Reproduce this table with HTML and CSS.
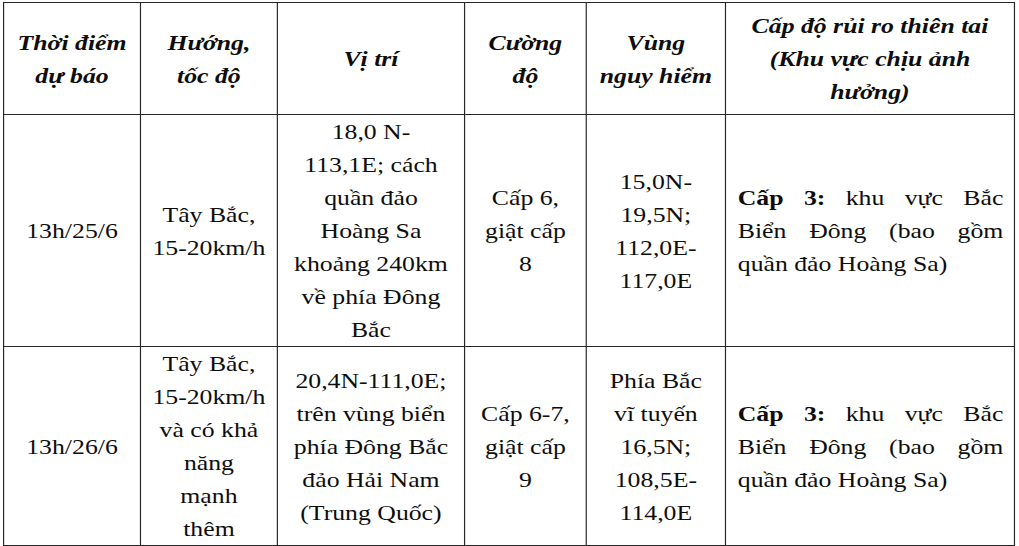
FILE: index.html
```html
<!DOCTYPE html>
<html lang="vi">
<head>
<meta charset="utf-8">
<title>Dự báo bão</title>
<link rel="stylesheet" href="styles.css">
</head>
<body>
<div class="page">
  <div class="sheet">
    <table class="forecast">
      <colgroup>
        <col class="c1"><col class="c2"><col class="c3"><col class="c4"><col class="c5"><col class="c6">
      </colgroup>
      <thead>
        <tr class="head">
          <th>Thời điểm<br>dự báo</th>
          <th>Hướng,<br>tốc độ</th>
          <th>Vị trí</th>
          <th>Cường<br>độ</th>
          <th>Vùng<br>nguy hiểm</th>
          <th>Cấp độ rủi ro thiên tai<br>(Khu vực chịu ảnh<br>hưởng)</th>
        </tr>
      </thead>
      <tbody>
        <tr>
          <td>13h/25/6</td>
          <td>Tây Bắc,<br>15-20km/h</td>
          <td>18,0 N-<br>113,1E; cách<br>quần đảo<br>Hoàng Sa<br>khoảng 240km<br>về phía Đông<br>Bắc</td>
          <td>Cấp 6,<br>giật cấp<br>8</td>
          <td>15,0N-<br>19,5N;<br>112,0E-<br>117,0E</td>
          <td class="risk"><span class="line"><b>Cấp 3:</b> khu vực Bắc</span> <span class="line">Biển Đông (bao gồm</span> <span class="last">quần đảo Hoàng Sa)</span></td>
        </tr>
        <tr>
          <td>13h/26/6</td>
          <td>Tây Bắc,<br>15-20km/h<br>và có khả<br>năng<br>mạnh<br>thêm</td>
          <td>20,4N-111,0E;<br>trên vùng biển<br>phía Đông Bắc<br>đảo Hải Nam<br>(Trung Quốc)</td>
          <td>Cấp 6-7,<br>giật cấp<br>9</td>
          <td>Phía Bắc<br>vĩ tuyến<br>16,5N;<br>108,5E-<br>114,0E</td>
          <td class="risk"><span class="line"><b>Cấp 3:</b> khu vực Bắc</span> <span class="line">Biển Đông (bao gồm</span> <span class="last">quần đảo Hoàng Sa)</span></td>
        </tr>
      </tbody>
    </table>
  </div>
</div>
</body>
</html>
```

FILE: styles.css
```css
html, body {
  margin: 0;
  padding: 0;
  background: #ffffff;
  overflow: hidden;
}

.page {
  padding: 2px 0 0 3px;
}

.sheet {
  width: 864px;
  transform: scaleX(1.17);
  transform-origin: 0 0;
}

.forecast {
  width: 864px;
  table-layout: fixed;
  border-collapse: collapse;
  font-family: "Liberation Serif", "Times New Roman", serif;
  font-size: 22px;
  line-height: 33px;
  color: #0d0d0d;
}

.c1 { width: 117px; }
.c2 { width: 117px; }
.c3 { width: 160px; }
.c4 { width: 104px; }
.c5 { width: 119px; }
.c6 { width: 247px; }

.forecast th,
.forecast td {
  border: 1.8px solid #262626;
  padding: 0 2px;
  text-align: center;
  vertical-align: middle;
  white-space: nowrap;
}

.head th {
  height: 111px;
  font-weight: bold;
  font-style: italic;
}

.forecast td.risk {
  text-align: left;
  padding: 0 9px 0 10px;
}

.risk .line {
  display: block;
  text-align: justify;
  text-align-last: justify;
}

.risk .last {
  display: block;
}

.risk b {
  font-weight: bold;
}
```
